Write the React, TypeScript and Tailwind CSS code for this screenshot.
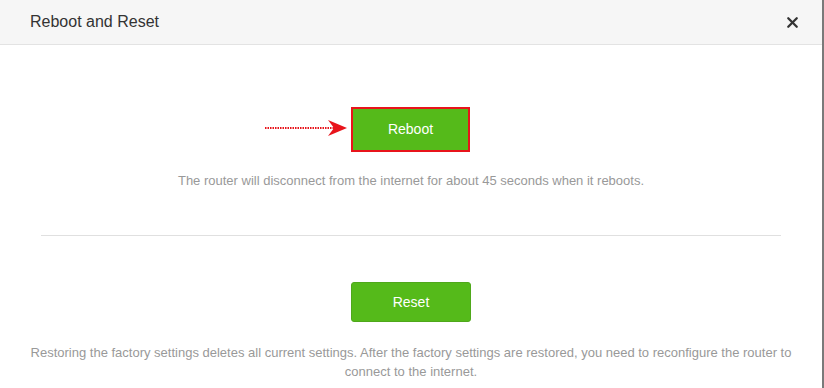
import { X } from "lucide-react";

const font = { fontFamily: '"Liberation Sans", Arial, sans-serif' };

// red pointer in front of the reboot button
function Arrow() {
  return (
    <svg width="82" height="18" viewBox="0 0 82 18" className="block">
      <line
        x1="0"
        y1="9"
        x2="70"
        y2="9"
        stroke="#e8141b"
        strokeWidth="2"
        strokeDasharray="1.5 1"
      />
      <path d="M63 1 L82 9 L63 17 L69 9 Z" fill="#e8141b" />
    </svg>
  );
}

export default function App() {
  return (
    <div
      className="flex h-[388px] w-[824px] bg-white text-[#333]"
      style={font}
    >
      <div className="flex flex-1 flex-col">
        <div className="flex h-[45px] items-center justify-between border-b border-[#e3e3e3] bg-[#f6f6f6] pl-[30px] pr-[21px]">
          <h1 className="text-[16px] text-[#333]">Reboot and Reset</h1>
          <X size={17} strokeWidth={3.2} className="text-[#333]" />
        </div>

        <div className="flex flex-col items-center pt-[62px]">
          <div className="relative -ml-[1px]">
            <div className="absolute right-[123px] top-[12px]">
              <Arrow />
            </div>
            <button className="h-[45px] w-[119px] border-2 border-[#e8141b] bg-[#55ba1a] text-[14px] text-white">
              Reboot
            </button>
          </div>
          <p className="mt-[20px] text-[13px] leading-[18px] text-[#999]">
            The router will disconnect from the internet for about 45 seconds
            when it reboots.
          </p>
        </div>

        <div className="mx-[41px] mt-[45px] border-t border-[#e0e0e0]" />

        <div className="flex flex-col items-center pt-[46px]">
          <button className="h-[40px] w-[120px] rounded-[3px] border border-[#4fa81b] bg-[#55ba1a] text-[14px] text-white">
            Reset
          </button>
          <p className="mt-[21px] px-[28px] text-center text-[13px] leading-[19px] text-[#999]">
            Restoring the factory settings deletes all current settings. After
            the factory settings are restored, you need to reconfigure the
            router to connect to the internet.
          </p>
        </div>
      </div>
      <div className="w-[2px] bg-[#7a7a7a]" />
    </div>
  );
}
